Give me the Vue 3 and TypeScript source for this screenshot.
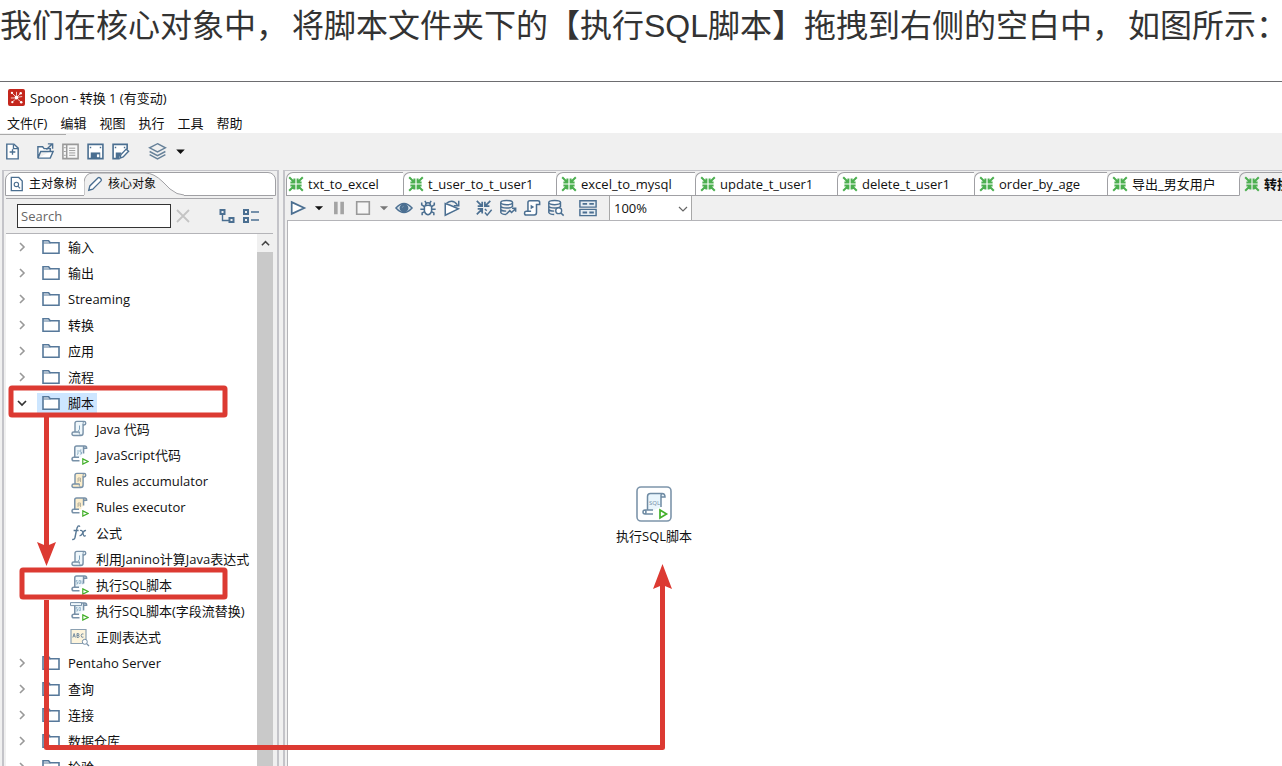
<script setup lang="ts">
import { ref } from 'vue'

interface TreeRow {
  label: string
  icon: string
  child?: boolean
  open?: boolean
}

const menus: string[] = ['文件(F)', '编辑', '视图', '执行', '工具', '帮助']

const rows: TreeRow[] = [
  { label: '输入', icon: 'folder' },
  { label: '输出', icon: 'folder' },
  { label: 'Streaming', icon: 'folder' },
  { label: '转换', icon: 'folder' },
  { label: '应用', icon: 'folder' },
  { label: '流程', icon: 'folder' },
  { label: '脚本', icon: 'folder', open: true },
  { label: 'Java 代码', icon: 'script-j', child: true },
  { label: 'JavaScript代码', icon: 'script-js-run', child: true },
  { label: 'Rules accumulator', icon: 'script-rule', child: true },
  { label: 'Rules executor', icon: 'script-rule-run', child: true },
  { label: '公式', icon: 'formula', child: true },
  { label: '利用Janino计算Java表达式', icon: 'script-j', child: true },
  { label: '执行SQL脚本', icon: 'script-sql', child: true },
  { label: '执行SQL脚本(字段流替换)', icon: 'script-sql-row', child: true },
  { label: '正则表达式', icon: 'regex', child: true },
  { label: 'Pentaho Server', icon: 'folder' },
  { label: '查询', icon: 'folder' },
  { label: '连接', icon: 'folder' },
  { label: '数据仓库', icon: 'folder' },
  { label: '检验', icon: 'folder' },
]

const tabs: { label: string; width: number }[] = [
  { label: 'txt_to_excel', width: 117 },
  { label: 't_user_to_t_user1', width: 153 },
  { label: 'excel_to_mysql', width: 139 },
  { label: 'update_t_user1', width: 142 },
  { label: 'delete_t_user1', width: 137 },
  { label: 'order_by_age', width: 133 },
  { label: '导出_男女用户', width: 132 },
  { label: '转换 1', width: 100 },
]

const mainTools: { icon: string; label: string; kind: string }[] = [
  { icon: 'new', label: '新建', kind: 'first' },
  { icon: 'open', label: '打开', kind: '' },
  { icon: 'list', label: '浏览', kind: '' },
  { icon: 'save', label: '保存', kind: '' },
  { icon: 'saveas', label: '另存为', kind: '' },
  { icon: 'layers', label: '视角', kind: 'apart' },
  { icon: 'caret', label: '更多视角', kind: 'narrow' },
]

const graphTools: { icon: string; label: string; kind: string }[] = [
  { icon: 'play', label: '运行', kind: '' },
  { icon: 'caret', label: '运行选项', kind: 'narrow' },
  { icon: 'pause', label: '暂停', kind: '' },
  { icon: 'stop', label: '停止', kind: '' },
  { icon: 'caret-dim', label: '停止选项', kind: 'narrow' },
  { icon: 'eye', label: '预览', kind: '' },
  { icon: 'bug', label: '调试', kind: '' },
  { icon: 'replay', label: '重放', kind: '' },
  { icon: 'verify', label: '校验', kind: 'apart' },
  { icon: 'db-impact', label: '影响分析', kind: '' },
  { icon: 'sql', label: '获取 SQL', kind: '' },
  { icon: 'db-search', label: '浏览数据库', kind: '' },
  { icon: 'results', label: '显示结果', kind: 'apart' },
]

const search = ref('')
const zoom = ref('100%')
</script>

<template>
  <div class="page">
    <svg class="sprite" aria-hidden="true">
      <defs>
        <symbol id="folder" viewBox="0 0 18 16">
          <path d="M1 14.2V1.8h5.6l1.6 2H17v10.4z" fill="#fff" stroke="#56789a" stroke-width="1.6" />
          <path d="M1.5 4h7" stroke="#56789a" stroke-width="1" />
        </symbol>
        <symbol id="scroll" viewBox="0 0 18 18">
          <path d="M4.5 13V3.2Q4.5 1 6.7 1h8Q16.6 1 16.6 3t-2 2h-1v9q0 2.800-2.600 2.800H3Q1.100 16.800 1.100 14.900T3 13h6.600" fill="inherit" stroke="#7891a8" stroke-width="1.600" />
          <path d="M13.600 5V3q0-1.800 1.200-2M9.600 13q-1 2 1.200 3.600" fill="none" stroke="#7891a8" />
        </symbol>
        <symbol id="scroll-run" viewBox="0 0 18 18">
          <path d="M4 13V3Q4 1 6 1h8.500q2 0 2 2t-2 2H13v5H11v3H4z" fill="inherit" />
          <path d="M4 13V3Q4 1 6 1h8.500q2 0 2 2v.5h-3.200V9M13.300 4V2.500q0-1 .9-1.500M8.500 13H3q-1.900 0-1.900 1.900T3 16.800h6" fill="none" stroke="#7891a8" stroke-width="1.600" />
        </symbol>
        <symbol id="run-badge" viewBox="0 0 7 7">
          <path d="M.8.900 6 3.500.800 6.100z" fill="#fff" stroke="#43b02a" stroke-width="1.200" />
        </symbol>
        <symbol id="script-j" viewBox="0 0 20 20">
          <use href="#scroll" x="1" y="1" width="16" height="17" fill="#eff7fb" />
          <path d="M9.500 6.500v4q0 1-1.500 1" fill="none" stroke="#7fa3bd" />
        </symbol>
        <symbol id="script-js-run" viewBox="0 0 20 20">
          <use href="#scroll-run" x="1" y="0" width="17" height="17" fill="#eff7fb" />
          <path d="M8 5v4l-1 .5M11.500 5H10v2h1.500v2H10" fill="none" stroke="#7fa3bd" stroke-width=".8" />
          <use href="#run-badge" x="12" y="13" width="7" height="7" />
        </symbol>
        <symbol id="script-rule" viewBox="0 0 20 20">
          <use href="#scroll" x="1" y="1" width="16" height="17" fill="#fdeecb" />
          <path d="M8 11V7h2.500v4M8 9h2.500" fill="none" stroke="#a5a49a" stroke-width=".8" />
        </symbol>
        <symbol id="script-rule-run" viewBox="0 0 20 20">
          <use href="#scroll-run" x="1" y="0" width="17" height="17" fill="#fdeecb" />
          <path d="M8 10V6h2.500v4M8 8h2.500" fill="none" stroke="#a5a49a" stroke-width=".8" />
          <use href="#run-badge" x="12" y="13" width="7" height="7" />
        </symbol>
        <symbol id="script-sql" viewBox="0 0 20 20">
          <use href="#scroll-run" x="1" y="0" width="17" height="17" fill="#eff7fb" />
          <path d="M7.500 5.500H6v1.500h1.500v2H6M9 5.500h1.500v3H9zM12 5.500v3.200h1.500" fill="none" stroke="#7fa3bd" stroke-width=".7" />
          <use href="#run-badge" x="12" y="13" width="7" height="7" />
        </symbol>
        <symbol id="script-sql-row" viewBox="0 0 20 20">
          <use href="#scroll-run" x="1" y="1" width="17" height="17" fill="#eff7fb" />
          <path d="M.5 1.600h11v3H.5z" fill="#eff7fb" stroke="#7891a8" />
          <path d="M7.500 6.500H6V8h1.500v2H6M9 6.500h1.500v3H9z" fill="none" stroke="#7fa3bd" stroke-width=".7" />
          <use href="#run-badge" x="12" y="13" width="7" height="7" />
        </symbol>
        <symbol id="formula" viewBox="0 0 20 20">
          <path d="M9.800 3.700Q9.300 2.300 8 3.200 7 4 6.300 8L5 14.500q-.7 2.600-2.800 1.900M3.600 7.500h5" fill="none" stroke="#587895" stroke-width="1.400" />
          <path d="M10 7.500q2-.8 2.600 1.500l.9 3q.6 1.800 2.200.6M16 7.600q-1.700-.5-3 2l-1.400 2q-.8 1.300-2.100 1" fill="none" stroke="#587895" stroke-width="1.300" />
        </symbol>
        <symbol id="regex" viewBox="0 0 20 20">
          <path d="M1 2.500h15v14H1z" fill="#fdf4dc" stroke="#8ba0b1" stroke-width="1.200" />
          <path d="m2.800 10.500 1.300-4 1.300 4M3.300 9.200h1.600M7 6.500v4h1q1.200-.1 1.200-1.100T8 8.400H7h1q1-.1 1-1t-1-.9zM13.500 7q-2-1-2.400 1.500.3 2.700 2.400 1.600" fill="none" stroke="#6e879d" stroke-width=".9" />
          <circle cx="14.800" cy="14.800" r="2.500" fill="#fff" stroke="#7891a8" />
          <path d="m16.600 16.600 2.400 2.400" stroke="#7891a8" stroke-width="1.300" />
        </symbol>
        <symbol id="new" viewBox="0 0 20 20">
          <path d="M4 2.200h7.500L16 6.500v11.300H4z" fill="#fff" stroke="#4b6f91" stroke-width="1.500" />
          <path d="M11 2.500V7h5M7 10.500h6M10 7.500v6" fill="none" stroke="#4b6f91" stroke-width="1.400" />
        </symbol>
        <symbol id="open" viewBox="0 0 20 20">
          <path d="M15 10V7H8.500L7 5H2v12l3-7h13l-3 7H2" fill="#fff" stroke="#4b6f91" stroke-width="1.500" />
          <path d="m11 8 6-6M12.500 2H17.500v5" fill="none" stroke="#4b6f91" stroke-width="1.500" />
        </symbol>
        <symbol id="list" viewBox="0 0 20 20">
          <path d="M2 2.500h16v15H2zM6 2.500v15" fill="#f8f8f8" stroke="#999" stroke-width="1.600" />
          <path d="M8.500 6.500H15M8.500 9H15M8.500 11.500H15M8.500 14H15M3 6h2M3 10h2M3 14h2" stroke="#999" />
        </symbol>
        <symbol id="save" viewBox="0 0 20 20">
          <path d="M2.200 2.500h15.600v15H2.200z" fill="#fff" stroke="#4b6f91" stroke-width="1.700" />
          <path d="M5 11h10v6.500H5z" fill="#4b6f91" />
          <path d="M11.500 13H14v3h-2.500z" fill="#fff" />
          <path d="M4 5h1.500v1.500H4zM14.500 5H16v1.500h-1.500z" fill="#4b6f91" />
        </symbol>
        <symbol id="saveas" viewBox="0 0 20 20">
          <path d="M17 8V2.500H2.200v15H9" fill="#fff" stroke="#4b6f91" stroke-width="1.700" />
          <path d="M5 11h6l-3 6.500H5zM4 5h1.500v1.500H4zM13.500 5H15v1.500h-1.500z" fill="#4b6f91" />
          <path d="m9.500 17 .8-3.600L16 7.500l2.500 2.300-5.700 6z" fill="#fff" stroke="#4b6f91" stroke-width="1.500" />
        </symbol>
        <symbol id="layers" viewBox="0 0 20 20">
          <path d="m10 1.800 8.300 4.300L10 10.400 1.700 6.100zM1.700 10 10 14.300l8.300-4.300M1.700 13.400 10 17.800l8.300-4.400" fill="none" stroke="#668199" stroke-width="1.500" />
        </symbol>
        <symbol id="caret" viewBox="0 0 20 20"><path d="M5.500 8h9L10 12.500z" fill="#111" /></symbol>
        <symbol id="caret-dim" viewBox="0 0 20 20"><path d="M5.500 8h9L10 12.500z" fill="#777" /></symbol>
        <symbol id="play" viewBox="0 0 20 20"><path d="M3 3.500 17 10 3 16.500z" fill="#fff" stroke="#4b6f91" stroke-width="1.900" /></symbol>
        <symbol id="pause" viewBox="0 0 20 20"><path d="M4.500 3h4v14h-4zM11.500 3h4v14h-4z" fill="#a3a3a3" /></symbol>
        <symbol id="stop" viewBox="0 0 20 20"><path d="M3 3h14v14H3z" fill="#f5f5f5" stroke="#999" stroke-width="1.800" /></symbol>
        <symbol id="eye" viewBox="0 0 20 20">
          <path d="M1 10Q10 0 19 10 10 20 1 10z" fill="#d8e2ea" stroke="#4b6f91" stroke-width="1.500" />
          <circle cx="10" cy="10" r="4.900" fill="#4b6f91" />
          <path d="M8 10q0-2 2-2" fill="none" stroke="#7c98b0" stroke-width=".8" />
        </symbol>
        <symbol id="bug" viewBox="0 0 20 20">
          <path d="M6 8q4-2 8 0v5q-.5 4-4 4.500Q6.500 17 6 13zM7.200 7.200q.2-3 2.800-3t2.800 3" fill="#fff" stroke="#4b6f91" stroke-width="1.700" />
          <path d="M6 8.500 3 6.500V3.800M14 8.500l3-2V3.800M6 11.500H1.500M14 11.500h4.500M6.300 14 3.500 15.500V18M13.700 14l2.800 1.500V18M8 4.500 6.500 2M12 4.500 13.500 2" fill="none" stroke="#4b6f91" stroke-width="1.700" />
        </symbol>
        <symbol id="replay" viewBox="0 0 20 20">
          <path d="M2.500 5v13L17 11 8 7z" fill="#fff" stroke="#4b6f91" stroke-width="1.700" />
          <path d="M4 4.500q7-5 12 2M17.500 2v5.500H12" fill="none" stroke="#4b6f91" stroke-width="1.600" />
        </symbol>
        <symbol id="arrows" viewBox="0 0 20 20">
          <path d="m1.500 1.500 6 6M3 8h5V3M18.500 1.500l-6 6M17 8h-5V3M1.500 18.500l6-6M3 12h5v5M18.500 18.500l-6-6M17 12h-5v5" fill="none" stroke="inherit" stroke-width="2.500" />
        </symbol>
        <symbol id="verify" viewBox="0 0 20 20">
          <path d="m2 2 5 5M3 8h5V3M17 2l-5 5M16 8h-5V3M2 17l5-5M3 11h5v5" fill="none" stroke="#4b6f91" stroke-width="1.900" />
          <path d="m11 11 2 2M11 15l2.500 3 5-6" fill="none" stroke="#4b6f91" stroke-width="1.600" />
        </symbol>
        <symbol id="db" viewBox="0 0 20 20">
          <path d="M2 4v11q1 2.200 6 2.200M15 4v5M2 8q1 2 6.500 2T15 8M2 11.500q1 2 6 2" fill="none" stroke="#4b6f91" stroke-width="1.600" />
          <ellipse cx="8.500" cy="4" rx="6.500" ry="2.300" fill="#fff" stroke="#4b6f91" stroke-width="1.600" />
        </symbol>
        <symbol id="db-impact" viewBox="0 0 20 20">
          <use href="#db" width="20" height="20" />
          <path d="m8 17 4-4 2 2 4.500-4.500M14.500 10.200h4v4" fill="none" stroke="#4b6f91" stroke-width="1.700" />
        </symbol>
        <symbol id="db-search" viewBox="0 0 20 20">
          <use href="#db" width="20" height="20" />
          <circle cx="13" cy="13" r="3.300" fill="#fff" stroke="#4b6f91" stroke-width="1.500" />
          <path d="m15.500 15.500 3 3" stroke="#4b6f91" stroke-width="1.700" />
        </symbol>
        <symbol id="sql" viewBox="0 0 20 20">
          <path d="M5.500 13.500V4q0-2 2-2h9q2 0 2 1.800V6H15v9q0 2.700-2.500 2.700h-9q-1.800 0-1.800-2t1.800-2.200H9" fill="#fff" stroke="#4b6f91" stroke-width="1.700" />
          <path d="M8.500 6.500 12.500 9l-4 2.500z" fill="#4b6f91" />
        </symbol>
        <symbol id="results" viewBox="0 0 20 20">
          <path d="M1 2h18v7H1zM1 11.500h18v7H1z" fill="#e6edf2" stroke="#4b6f91" stroke-width="1.600" />
          <path d="M4 5.500h5M11.500 5.500h5M4 15h5M11.500 15h5" stroke="#4b6f91" stroke-width="2" />
        </symbol>
        <symbol id="doc-search" viewBox="0 0 16 18">
          <path d="M1.500 1.500h8.500l4 4v11h-12.500z" fill="#fff" stroke="#4b6f91" stroke-width="1.500" />
          <circle cx="7.300" cy="9.500" r="2.500" fill="none" stroke="#4b6f91" stroke-width="1.300" />
          <path d="m9 11.500 2.500 2.500" stroke="#4b6f91" stroke-width="1.300" />
        </symbol>
        <symbol id="pencil" viewBox="0 0 18 18">
          <path d="m2 16 1.200-4.800L12.500 2q1-.8 2.200.3l1 1q1 1.200.1 2.200L6.500 14.800z" fill="#fff" stroke="#4b6f91" stroke-width="1.500" />
        </symbol>
      </defs>
    </svg>

    <p class="caption">
      <span>我们在核心对象中，</span>
      <span>将脚本文件夹下的【执行SQL脚本】拖拽到右侧的空白中，</span>
      <span>如图所示：</span>
    </p>

    <div class="window">
      <header class="titlebar">
        <svg class="logo" viewBox="0 0 18 18" aria-hidden="true">
          <rect width="18" height="18" rx="2" fill="#c4271d" />
          <path d="m4.500 4.500 3 3M13 5l-2.500 2.500M5 13.500 7.500 11M13.500 13.500 10.500 11M3 9.500h4M11 8.500l4-.5M9 3v4" stroke="#fff" stroke-width=".8" />
          <g fill="#fff">
            <circle cx="9" cy="9" r="2" />
            <circle cx="4.200" cy="4.200" r="1.200" />
            <circle cx="13.500" cy="4.500" r="1.300" />
            <circle cx="4.600" cy="14" r="1.200" />
            <circle cx="14" cy="14" r="1.300" />
          </g>
        </svg>
        <span>Spoon - 转换 1 (有变动)</span>
      </header>
      <nav class="menubar">
        <button v-for="m in menus" :key="m" type="button">{{ m }}</button>
      </nav>
      <div class="toolbar">
        <button v-for="t in mainTools" :key="t.icon" type="button" class="tool" :class="t.kind" :aria-label="t.label">
          <svg><use :href="'#' + t.icon" /></svg>
        </button>
      </div>

      <div class="workspace">
        <aside class="explorer">
          <div class="side-tabs" role="tablist">
            <svg class="tab-shape" aria-hidden="true">
              <path d="M0 23V10Q1 1 9 1h52q9 0 18 9l7 7q7 6 14 6v1H0z" fill="#f0f0f0" />
              <path d="M0 23V10Q1 1 9 1h52q9 0 18 9l7 7q7 6 14 6" fill="none" stroke="#a0a0a4" />
            </svg>
            <button type="button" role="tab" class="side-tab" aria-selected="false">
              <svg><use href="#doc-search" /></svg>主对象树
            </button>
            <button type="button" role="tab" class="side-tab active" aria-selected="true">
              <svg><use href="#pencil" /></svg>核心对象
            </button>
          </div>
          <div class="searchbar">
            <input v-model="search" type="text" placeholder="Search" aria-label="Search" />
            <button type="button" class="clear" aria-label="清除">
              <svg viewBox="0 0 14 14"><path d="m1 1 12 12M13 1 1 13" stroke="#c4c4c4" stroke-width="1.800" /></svg>
            </button>
            <button type="button" class="tree-tool" aria-label="展开全部">
              <svg viewBox="0 0 16 16"><path d="M1.500 2h4v4h-4zM10.500 10h4v4h-4z" fill="none" stroke="#4b6f91" stroke-width="2" /><path d="M3.500 6v6.500H10" fill="none" stroke="#4b6f91" stroke-width="1.400" /></svg>
            </button>
            <button type="button" class="tree-tool" aria-label="折叠全部">
              <svg viewBox="0 0 16 16"><path d="M1 2h4v4H1zM1 10h4v4H1z" fill="none" stroke="#4b6f91" stroke-width="2" /><path d="M8 4h8M8 12h8" stroke="#4b6f91" stroke-width="1.500" /></svg>
            </button>
          </div>
          <div class="tree-area">
            <ul class="tree">
              <li v-for="r in rows" :key="r.label" :class="{ child: r.child, open: r.open }">
                <svg v-if="!r.child" class="twist" viewBox="0 0 10 10" aria-hidden="true">
                  <path v-if="r.open" d="m1 3 4 4 4-4" fill="none" stroke="#333" stroke-width="1.700" />
                  <path v-else d="m3 1 4 4-4 4" fill="none" stroke="#999" stroke-width="1.600" />
                </svg>
                <span class="node">
                  <svg class="glyph" aria-hidden="true"><use :href="'#' + r.icon" /></svg>
                  <span>{{ r.label }}</span>
                </span>
              </li>
            </ul>
            <div class="scroll">
              <button type="button" aria-label="向上滚动">
                <svg viewBox="0 0 10 10"><path d="m1 7 4-4 4 4" fill="none" stroke="#444" stroke-width="1.700" /></svg>
              </button>
              <div class="thumb"></div>
            </div>
          </div>
        </aside>

        <main class="editor">
          <div class="file-tabs" role="tablist">
            <button
              v-for="(t, i) in tabs"
              :key="t.label"
              type="button"
              role="tab"
              class="file-tab"
              :class="{ active: i === tabs.length - 1 }"
              :aria-selected="i === tabs.length - 1"
              :style="{ width: t.width + 'px' }"
            >
              <svg><use href="#arrows" /></svg>{{ t.label }}
            </button>
          </div>
          <div class="graph-tools">
            <button v-for="t in graphTools" :key="t.icon" type="button" class="tool" :class="t.kind" :aria-label="t.label">
              <svg><use :href="'#' + t.icon" /></svg>
            </button>
            <label class="zoom">
              <select v-model="zoom" aria-label="缩放">
                <option>200%</option>
                <option>100%</option>
                <option>50%</option>
              </select>
              <svg viewBox="0 0 10 10" aria-hidden="true"><path d="m1 3 4 4 4-4" fill="none" stroke="#666" stroke-width="1.200" /></svg>
            </label>
          </div>
          <div class="canvas">
            <div class="step">
              <svg viewBox="0 0 36 36" aria-hidden="true">
                <rect x="1" y="1" width="34" height="34" rx="4" fill="#fff" stroke="#7d95ab" stroke-width="1.600" />
                <path d="M11.500 24V10.500q0-3 3-3H26q2 0 2 3.500h-3v10L18 24z" fill="#e9f5fc" />
                <path d="M11.500 24V10.500q0-3 3-3H26q3 0 3 3.500h-4V21M25 11V9.500q0-1.500 1.200-2M17 24H9q-2 0-2 2t2 2h8M9 24q2 2 0 4" fill="none" stroke="#6f8ba3" stroke-width="1.500" />
                <text x="13" y="19" class="step-sql">SQL</text>
                <path d="m24 24 6.500 4L24 32z" fill="#fff" stroke="#43b02a" stroke-width="1.700" />
              </svg>
              <span>执行SQL脚本</span>
            </div>
          </div>
        </main>
      </div>
    </div>

    <svg class="marks" aria-hidden="true">
      <g fill="none" stroke="#dc3a32">
        <rect x="11" y="388" width="214" height="27" rx="1" stroke-width="5" />
        <rect x="22" y="570" width="203" height="27" rx="1" stroke-width="5" />
        <path d="M46.500 417v130M46.500 600v147.500h616V585" stroke-width="5" stroke-linejoin="round" />
      </g>
      <path d="m37 542 9.500 4 9.500-4-9.500 24zM653 589l9.500-25 9.500 25-9.500-4z" fill="#dc3a32" />
    </svg>
  </div>
</template>

<style>
body {
  margin: 0;
  background: #fff;
}
</style>

<style scoped>
.page {
  position: relative;
  display: flex;
  flex-direction: column;
  height: 100vh;
  overflow: hidden;
  font-family: "Open Sans", "Noto Sans CJK SC", sans-serif;
  font-size: 13px;
  line-height: 18px;
  color: #111;
}
.page * {
  box-sizing: border-box;
}
.sprite {
  position: absolute;
  width: 0;
  height: 0;
}
button {
  border: 0;
  padding: 0;
  background: none;
  font: inherit;
  color: inherit;
  white-space: nowrap;
}
svg {
  display: block;
  flex: none;
}
.caption {
  display: flex;
  flex: none;
  gap: 4px;
  margin: 0;
  height: 81px;
  font: 32px/52px "Liberation Sans", "Noto Sans CJK SC", sans-serif;
  color: #333;
  white-space: nowrap;
}
.caption span {
  flex: none;
}
.window {
  display: flex;
  flex: 1;
  flex-direction: column;
  min-height: 0;
  border-top: 1px solid #6d6d70;
  background: #f0f0f0;
}
.titlebar {
  display: flex;
  align-items: center;
  gap: 5px;
  height: 31px;
  flex: none;
  padding-left: 8px;
  background: #fff;
}
.logo {
  width: 17px;
  height: 17px;
}
.menubar {
  display: flex;
  flex: none;
  gap: 13px;
  height: 20px;
  padding-left: 7px;
  background: #fff;
}
.toolbar {
  position: relative;
  display: flex;
  align-items: center;
  height: 37px;
  flex: none;
}
.toolbar::before {
  content: "";
  position: absolute;
  top: 1px;
  left: 0;
  width: 66px;
  height: 1px;
  background: #aaa;
}
.tool {
  display: flex;
  align-items: center;
  justify-content: center;
  width: 24px;
  height: 24px;
  flex: none;
}
.tool svg {
  width: 18px;
  height: 18px;
}
.toolbar .tool {
  width: 25px;
}
.toolbar .tool svg {
  width: 19px;
  height: 19px;
}
.toolbar .first {
  margin-right: 8px;
}
.toolbar .apart {
  margin-left: 12px;
}
.toolbar .narrow {
  width: 20px;
}
.workspace {
  display: flex;
  flex: 1;
  gap: 4px;
  min-height: 0;
  padding-left: 2px;
}
.explorer {
  display: flex;
  flex-direction: column;
  flex: none;
  width: 277px;
  border: 2px solid #c4c4c9;
  border-width: 1px 2px 0;
  padding: 1px 1px 0;
}
.side-tabs {
  position: relative;
  display: flex;
  height: 24px;
  flex: none;
  border: 1px solid #a0a0a4;
  border-radius: 8px 8px 0 0;
  background: #fff;
  font-size: 12px;
}
.tab-shape {
  position: absolute;
  top: -1px;
  left: 78px;
  width: 102px;
  height: 24px;
}
.side-tab {
  position: relative;
  display: flex;
  align-items: center;
  gap: 5px;
  width: 78px;
  padding-left: 4px;
}
.side-tab svg {
  width: 14px;
  height: 16px;
}
.side-tab.active {
  padding-left: 3px;
}
.side-tab.active svg {
  width: 16px;
  height: 16px;
}
.searchbar {
  display: flex;
  align-items: center;
  height: 36px;
  flex: none;
  margin: 2px 3px 0 1px;
  padding: 0 9px 0 11px;
  border-top: 1px solid #a8a8ac;
  border-bottom: 1px solid #b4b4b8;
}
.searchbar input {
  width: 154px;
  height: 24px;
  margin: 0;
  padding: 0 3px;
  border: 1px solid #333;
  border-radius: 0;
  background: #fff;
  font: inherit;
  color: #333;
}
.searchbar input::placeholder {
  color: #666;
}
.clear {
  margin: 0 28px 0 5px;
}
.clear svg {
  width: 14px;
  height: 14px;
}
.tree-tool {
  margin-left: 1px;
  margin-right: 7px;
}
.tree-tool svg {
  width: 16px;
  height: 16px;
}
.tree-area {
  display: flex;
  flex: 1;
  min-height: 0;
  margin: 0 3px 0 1px;
  background: #fff;
  overflow: hidden;
}
.tree {
  flex: 1;
  min-width: 0;
  margin: 0;
  padding: 0;
  list-style: none;
}
.tree li {
  display: flex;
  align-items: center;
  height: 26px;
  padding-left: 11px;
}
.tree li.child {
  padding-left: 59px;
}
.twist {
  width: 10px;
  height: 10px;
  margin-right: 10px;
}
.node {
  display: flex;
  align-items: center;
  height: 20px;
  gap: 8px;
  padding: 0 3px 0 5px;
  white-space: nowrap;
}
.open .node {
  background: #cde6ff;
}
.glyph {
  width: 18px;
  height: 16px;
}
.child .glyph {
  width: 20px;
  height: 20px;
}
.child .node {
  gap: 6px;
}
.scroll {
  display: flex;
  flex-direction: column;
  flex: none;
  width: 16px;
  background: #f0f0f0;
}
.scroll button {
  display: flex;
  align-items: center;
  justify-content: center;
  height: 18px;
}
.scroll svg {
  width: 9px;
  height: 9px;
}
.thumb {
  flex: 1;
  background: #c9c9c9;
}
.editor {
  display: flex;
  flex: 1;
  flex-direction: column;
  min-width: 0;
  border: 2px solid #c4c4c9;
  border-width: 1px 0 0 2px;
  padding: 1px 0 0 1px;
}
.file-tabs {
  display: flex;
  height: 24px;
  flex: none;
  overflow: hidden;
}
.file-tab {
  display: flex;
  align-items: center;
  gap: 4px;
  flex: none;
  padding-left: 1px;
  border: 1px solid #a0a0a4;
  border-right: 0;
  border-radius: 7px 0 0 0;
  background: #fff;
}
.file-tab + .file-tab {
  padding-left: 4px;
}
.file-tab svg {
  width: 16px;
  height: 16px;
  stroke: #4caf50;
}
.file-tab.active {
  border-bottom-color: #f0f0f0;
  background: #f0f0f0;
  font-weight: 700;
}
.graph-tools {
  display: flex;
  align-items: center;
  height: 24px;
  flex: none;
}
.graph-tools .narrow {
  width: 17px;
}
.graph-tools .apart {
  margin-left: 8px;
}
.zoom {
  position: relative;
  width: 83px;
  height: 24px;
  margin-left: 9px;
  border: 1px solid #a8a8a8;
  border-width: 0 1px;
  background: #fff;
}
.zoom select {
  appearance: none;
  width: 100%;
  height: 24px;
  padding: 0 4px;
  border: 0;
  background: none;
  font: inherit;
  color: #111;
}
.zoom svg {
  position: absolute;
  top: 8px;
  right: 3px;
  width: 10px;
  height: 10px;
  pointer-events: none;
}
.canvas {
  position: relative;
  flex: 1;
  margin-left: 1px;
  border: 1px solid #b4b4b8;
  border-width: 1px 0 0 1px;
  background: #fff;
}
.step {
  position: absolute;
  top: 265px;
  left: 328px;
  display: flex;
  flex-direction: column;
  align-items: center;
  gap: 5px;
}
.step svg {
  width: 36px;
  height: 36px;
}
.step-sql {
  font: 6px "Open Sans", sans-serif;
  fill: #6f8ba3;
}
.marks {
  position: absolute;
  inset: 0;
  width: 100%;
  height: 100%;
  pointer-events: none;
}
</style>
